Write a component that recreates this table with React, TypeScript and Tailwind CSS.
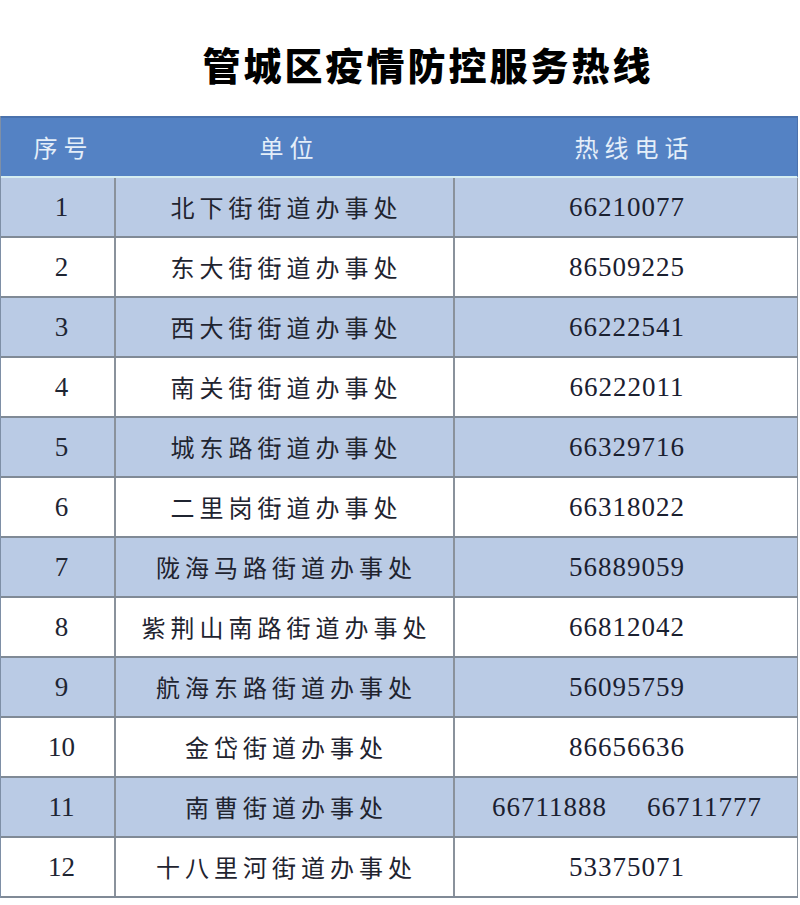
import React from "react";

const rows: [string, string, string[]][] = [
  ["1", "北下街街道办事处", ["66210077"]],
  ["2", "东大街街道办事处", ["86509225"]],
  ["3", "西大街街道办事处", ["66222541"]],
  ["4", "南关街街道办事处", ["66222011"]],
  ["5", "城东路街道办事处", ["66329716"]],
  ["6", "二里岗街道办事处", ["66318022"]],
  ["7", "陇海马路街道办事处", ["56889059"]],
  ["8", "紫荆山南路街道办事处", ["66812042"]],
  ["9", "航海东路街道办事处", ["56095759"]],
  ["10", "金岱街道办事处", ["86656636"]],
  ["11", "南曹街道办事处", ["66711888", "66711777"]],
  ["12", "十八里河街道办事处", ["53375071"]],
];

export default function App() {
  return (
    <div className="w-[800px] h-[905px] bg-white overflow-hidden font-['Noto_Sans_CJK_SC','Noto_Sans',sans-serif]">
      <div className="h-[116px] flex items-center justify-center pl-[56px] pt-[10px]">
        <h1 className="text-[38px] font-black text-black tracking-[3px]">
          管城区疫情防控服务热线
        </h1>
      </div>
      <div className="w-[798px] border-l border-[#7e8fa6]">
        <div className="grid grid-cols-[115px_339px_343px] h-[62px] bg-[#5482c4] border-t-2 border-[#4a72ad] border-b-2 border-b-[#d6eef2] border-r border-r-[#4a72ad]">
          <div className="flex items-center justify-center text-[24px] text-[#e4eef9] tracking-[6px] pl-[10px]">序号</div>
          <div className="flex items-center justify-center text-[24px] text-[#e4eef9] tracking-[6px] pl-[8px]">单位</div>
          <div className="flex items-center justify-center text-[24px] text-[#e4eef9] tracking-[6px] pl-[16px]">热线电话</div>
        </div>
        {rows.map(([n, name, phones], i) => (
          <div
            key={n}
            className={`grid grid-cols-[115px_339px_343px] h-[60px] border-b-2 border-[#808a96] ${i % 2 === 0 ? "bg-[#bacbe5]" : "bg-white"}`}
          >
            <div className="flex items-center justify-center border-r-2 border-[#8a929c] text-[27px] text-[#1e2533] pl-[8px] font-['Liberation_Serif','DejaVu_Serif',serif]">
              {n}
            </div>
            <div className="flex items-center justify-center border-r-2 border-[#8a929c] text-[24px] text-[#1f2430] tracking-[5px] pl-[4px]">
              {name}
            </div>
            <div className="flex items-center justify-center gap-[40px] border-r border-[#8a929c] text-[27px] text-[#1a2030] tracking-[1px] pl-[2px] font-['Liberation_Serif','DejaVu_Serif',serif]">
              {phones.map((p) => (
                <span key={p}>{p}</span>
              ))}
            </div>
          </div>
        ))}
      </div>
    </div>
  );
}
